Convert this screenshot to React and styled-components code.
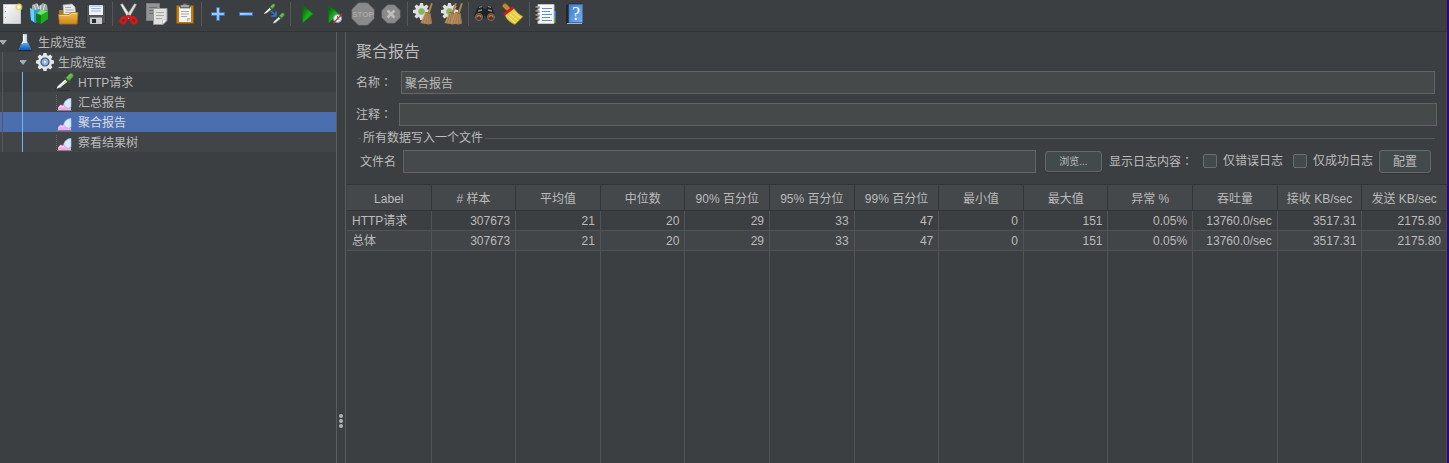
import React from "react";
import styled, { createGlobalStyle } from "styled-components";

const color = {
  bg: "#3c3f41",
  stripe: "#414547",
  header: "#44484a",
  field: "#45494a",
  border: "#646464",
  line: "#555555",
  grid: "#515456",
  edge: "#4a4d4f",
  dark: "#323537",
  text: "#bbbbbb",
  selected: "#4b6eaf",
};

const GlobalStyle = createGlobalStyle`
  * { box-sizing: border-box; }
  body {
    margin: 0;
    background: ${color.bg};
    color: ${color.text};
    font: 12px/20px "Liberation Sans", "Noto Sans CJK SC", sans-serif;
  }
  button, input { font: inherit; color: inherit; }
`;

const Window = styled.div`
  display: flex;
  flex-direction: column;
  height: 100vh;
  min-height: 300px;
  border-right: 2px solid #2a0a7a;
  overflow: hidden;
`;

const Toolbar = styled.header`
  display: flex;
  flex: none;
  height: 32px;
  margin-left: -2px;
  border-bottom: 1px solid ${color.dark};
`;

const ToolButton = styled.button`
  display: grid;
  place-items: center;
  flex: none;
  width: 28px;
  height: 28px;
  padding: 0;
  border: 0;
  background: none;
`;

const Separator = styled.span`
  flex: none;
  width: 5px;
  height: 24px;
  margin-top: 2px;
  background: linear-gradient(#555859, #555859) center / 1px 100% no-repeat;
`;

const Svg = styled.svg`
  display: block;
  flex: none;
  width: ${(p) => p.$size || 24}px;
  height: ${(p) => p.$size || 24}px;
`;

const Body = styled.div`
  display: flex;
  flex: 1;
  min-height: 0;
`;

const Sidebar = styled.nav`
  flex: none;
  width: 336px;
`;

const Tree = styled.ul`
  margin: 0;
  padding: 0;
  list-style: none;
`;

const guide = (c) => `linear-gradient(${c}, ${c})`;

const TreeRow = styled.li`
  display: flex;
  align-items: center;
  height: 20px;
  padding-left: ${(p) => p.$level * 20}px;
  color: ${(p) => (p.$selected ? "#d6dbe4" : color.text)};
  background-color: ${(p) => (p.$selected ? color.selected : p.$striped ? color.stripe : "transparent")};
  background-image: ${(p) =>
    [p.$level > 0 && guide("#55585a"), p.$level > 1 && guide("#6cb8f5")].filter(Boolean).join(",") || "none"};
  background-repeat: no-repeat;
  background-size: 1px 100%;
  background-position: 2px 0, 22px 0;
`;

const Toggle = styled.button`
  flex: none;
  width: 8px;
  height: 8px;
  margin-right: 7px;
  padding: 0;
  border: 0;
  background: none;
`;

const ToggleSpace = styled.span`
  flex: none;
  width: 15px;
`;

const TreeLabel = styled.span`
  margin-left: 3px;
  padding-top: 2px;
`;

const Divider = styled.div`
  display: flex;
  flex: none;
  flex-direction: column;
  align-items: center;
  justify-content: flex-end;
  gap: 1px;
  width: 10px;
  padding-bottom: 35px;
  border-left: 1px solid #5a5d5e;
  border-right: 1px solid #5a5d5e;
`;

const Grip = styled.span`
  width: 4px;
  height: 4px;
  border-radius: 2px;
  background: #b0b2b3;
`;

const Main = styled.main`
  display: flex;
  flex: 1;
  flex-direction: column;
  min-width: 0;
  box-shadow: inset -1px 0 ${color.edge};
`;

const Title = styled.h1`
  margin: 8px 10px 7px;
  font-size: 16px;
  line-height: 24px;
  font-weight: 400;
`;

const Field = styled.div`
  display: flex;
  align-items: center;
  margin: 0 ${(p) => p.$right}px 9px 10px;
  gap: ${(p) => p.$gap}px;
`;

const Colon = styled.span`
  font-family: "Noto Sans CJK TC", sans-serif;
`;

const TextInput = styled.input`
  flex: 1;
  min-width: 0;
  height: 23px;
  padding: 0 3px;
  border: 1px solid ${color.border};
  border-radius: 0;
  background: ${color.field};
  outline: none;
`;

const Group = styled.section`
  margin: -7px 12px 0 12px;
`;

const GroupTitle = styled.h2`
  display: flex;
  align-items: center;
  gap: 2px;
  height: 20px;
  margin: 0;
  font-size: 12px;
  line-height: 22px;
  font-weight: 400;
  &::before, &::after {
    content: "";
    height: 1px;
    background: ${color.line};
  }
  &::before { width: 3px; }
  &::after { flex: 1; }
`;

const FileRow = styled.div`
  display: flex;
  align-items: center;
  height: 23px;
  margin: 2px 4px 11px 2px;
`;

const FileField = styled.div`
  display: flex;
  flex: 1;
  align-items: center;
  gap: 7px;
  min-width: 0;
  margin-right: 9px;
`;

const Button = styled.button`
  flex: none;
  width: ${(p) => (p.$small ? 57 : 52)}px;
  height: ${(p) => (p.$small ? 21 : 23)}px;
  padding: 0;
  border: 1px solid #66696a;
  border-radius: 3px;
  background: #434a4b;
  box-shadow: 0 1px 1px #333638;
  font-size: ${(p) => (p.$small ? 10 : 12)}px;
  line-height: 16px;
`;

const LogLabel = styled.span`
  flex: none;
  margin: 0 10px 0 7px;
`;

const CheckLabel = styled.label`
  display: flex;
  flex: none;
  align-items: center;
  gap: 6px;
  height: 20px;
  margin: 0 ${(p) => (p.$last ? 6 : 10)}px 2px 0;
`;

const Checkbox = styled.input`
  appearance: none;
  width: 14px;
  height: 14px;
  margin: 0;
  border: 1px solid #6b6e6f;
  border-radius: 2px;
  background: #434a4b;
  &:checked { background: ${color.selected}; }
`;

const TableArea = styled.div`
  flex: 1;
  min-height: 0;
  border-top: 1px solid ${color.dark};
  border-left: 1px solid transparent;
`;

const Table = styled.table`
  width: 100%;
  height: 100%;
  table-layout: fixed;
  border-collapse: separate;
  border-spacing: 0;
`;

const HeadCell = styled.th`
  height: 26px;
  padding: 2px 0 0;
  border-right: 1px solid ${color.dark};
  border-bottom: 1px solid ${color.dark};
  background: ${color.header};
  font-weight: 400;
  line-height: 20px;
  white-space: nowrap;
  &:last-child { border-right-color: ${color.edge}; }
`;

const DataRow = styled.tr`
  height: 20px;
  background: ${(p) => (p.$striped ? color.stripe : "transparent")};
`;

const Cell = styled.td`
  padding: ${(p) => (p.$empty ? 0 : 2)}px 5px 0;
  border-right: 1px solid ${color.grid};
  border-bottom: ${(p) => (p.$empty ? 0 : 1)}px solid ${color.grid};
  line-height: 17px;
  text-align: right;
  white-space: nowrap;
  &:first-child { text-align: left; }
  &:last-child { border-right-color: ${color.edge}; }
`;

const Gradients = () => (
  <svg width="0" height="0" style={{ display: "block" }} aria-hidden="true">
    <defs>
      <linearGradient id="paper" x2="1" y2="1"><stop stopColor="#ffffff" /><stop offset="1" stopColor="#d4d4d4" /></linearGradient>
      <linearGradient id="play" x2="1" y2="1"><stop stopColor="#064d06" /><stop offset=".55" stopColor="#1cb41c" /><stop offset="1" stopColor="#096809" /></linearGradient>
      <linearGradient id="folder" x2="0" y2="1"><stop stopColor="#f0bd55" /><stop offset="1" stopColor="#c8871c" /></linearGradient>
      <linearGradient id="blue" x2="1" y2="1"><stop stopColor="#b9dbf8" /><stop offset="1" stopColor="#7db0e6" /></linearGradient>
      <linearGradient id="straw" x2="1" y2="1"><stop stopColor="#c69a68" /><stop offset="1" stopColor="#a98256" /></linearGradient>
      <linearGradient id="book" x2="1" y2="1"><stop stopColor="#3f7fd0" /><stop offset="1" stopColor="#75adf0" /></linearGradient>
      <linearGradient id="flask" x2="0" y2="1"><stop stopColor="#59a7f4" /><stop offset="1" stopColor="#0757b8" /></linearGradient>
      <linearGradient id="bulb" x2="1" y2="1"><stop stopColor="#9ddb78" /><stop offset="1" stopColor="#3f8a2b" /></linearGradient>
    </defs>
  </svg>
);

const NewIcon = () => (
  <Svg viewBox="0 0 24 24">
    <path d="M3.5 2.5h17v19h-17z" fill="url(#paper)" stroke="#c8c8c8" />
    <path d="M5.5 5v1M5.5 9v1M5.5 15v1" stroke="#aaa" />
    <circle cx="19" cy="5" r="3.5" fill="#e6d452" opacity=".75" />
    <circle cx="19" cy="5" r="1.8" fill="#fffbd0" />
  </Svg>
);

const TemplatesIcon = () => (
  <Svg viewBox="0 0 24 24">
    <path d="M4 3l5-2 2 3 4-3 4 2 1 6-7 5-9-4z" fill="#9ca8a8" />
    <path d="M6 3l2 5M9 2l2 6M13 3l-1 5M17 2l-2 7" stroke="#d6dfdf" />
    <path d="M2 6l4 2 6-1v12l-5 2-4-3z" fill="#2d9bd6" />
    <path d="M2 6l4 2v12l-3-2z" fill="#72cdf2" />
    <path d="M8 12l5-3 7-1v9l-7 5-5-3z" fill="#1faa25" />
    <path d="M8 12l5 1v9l-5-3z" fill="#087b16" />
    <path d="M9 11l4-3 7 1-7 4z" fill="#77e357" />
  </Svg>
);

const OpenIcon = () => (
  <Svg viewBox="0 0 24 24">
    <path d="M3 8h5l1 2h12v6H3z" fill="#a87823" />
    <path d="M7 3l9-1 3 3 1 11H8z" fill="#e9e9e9" stroke="#aaa" strokeWidth=".7" />
    <path d="M9 5.5h6M9.5 8h8M9.5 10.500h8" stroke="#aaa" />
    <path d="M2.500 12.500H13l2-2h7l-1 11.500H3.500z" fill="url(#folder)" stroke="#b77812" strokeWidth=".8" />
    <path d="M3.500 13.500h10l2-2h5" stroke="#ffe094" fill="none" strokeWidth=".7" />
  </Svg>
);

const SaveIcon = () => (
  <Svg viewBox="0 0 24 24">
    <path d="M2.500 2.500h19v19H4l-1.500-1.500z" fill="#505356" stroke="#333637" />
    <path d="M5 3h14v10H5z" fill="#edf4fb" />
    <path d="M5 3h14v2H5z" fill="#bed6ef" />
    <path d="M7 6.500h10M7 9h10" stroke="#a8b4c0" />
    <path d="M6 15.500h12V22H6z" fill="#c9cbcc" />
    <path d="M8 17h4v4H8z" fill="#292c2e" />
  </Svg>
);

const CutIcon = () => (
  <Svg viewBox="0 0 24 24">
    <path d="M3.500 2.500l2-.8 8.500 13-2.500 2z" fill="#f0f0f0" stroke="#9b9b9b" strokeWidth=".5" />
    <path d="M19.500 2.500l-2-.8-8.500 13 2.500 2z" fill="#dcdcdc" stroke="#999" strokeWidth=".5" />
    <g fill="none" stroke="#d8161c" strokeWidth="2.600">
      <ellipse cx="6.300" cy="18.300" rx="2.400" ry="3" transform="rotate(35 6.300 18.300)" />
      <ellipse cx="16.700" cy="18.300" rx="2.400" ry="3" transform="rotate(-35 16.700 18.300)" />
      <path d="M8 16l3.500-2 3.500 2" />
    </g>
  </Svg>
);

const CopyIcon = () => (
  <Svg viewBox="0 0 24 24">
    <path d="M1.500 1.500h13v17h-13z" fill="#929596" stroke="#7c7f80" />
    <path d="M4 5.500h8M4 8.500h4M4 11.500h4" stroke="#6c6f70" />
    <path d="M8.500 6.500h13.500v12l-4 4H8.500z" fill="#dfe0de" stroke="#96999a" />
    <path d="M11 10.500h8M11 13.500h8M11 16.500h6" stroke="#a5a7a7" />
    <path d="M17.500 22v-4H22z" fill="#fff" stroke="#aaa" strokeWidth=".6" />
  </Svg>
);

const PasteIcon = () => (
  <Svg viewBox="0 0 24 24">
    <path d="M3.500 3.500h17v18h-17z" fill="#c17d18" stroke="#865510" />
    <path d="M6 5h12v15H6z" fill="#f3f3f1" />
    <path d="M8 9.500h8M8 12h8M8 14.500h6" stroke="#aaa" />
    <path d="M14 20v-4h4z" fill="#bdbdbd" />
    <path d="M7 6V3h3V1.500h4V3h3v3z" fill="#777a78" stroke="#4a4c4b" strokeWidth=".6" />
    <path d="M8 4h8" stroke="#d2d2d2" />
  </Svg>
);

const PlusIcon = () => (
  <Svg viewBox="0 0 24 24">
    <path d="M10.500 5.500h3v5h5v3h-5v5h-3v-5h-5v-3h5z" fill="url(#blue)" stroke="#3774bd" />
  </Svg>
);

const MinusIcon = () => (
  <Svg viewBox="0 0 24 24">
    <path d="M5.500 10.500h13v3h-13z" fill="url(#blue)" stroke="#3774bd" />
  </Svg>
);

const Dropper = () => (
  <g>
    <path d="M.5 17.500l2-3.500 8-7.500 3 3L5.500 16z" fill="#cfd8d5" stroke="#252829" strokeWidth=".8" />
    <path d="M2.500 15.500l9-8" stroke="#fff" strokeWidth="1.300" />
    <path d="M9.500 5.500l5.500 5.500" stroke="#335a2b" strokeWidth="2" />
    <path d="M11 5.800L14.500 2c2-1.800 4.800.6 3.300 3L14.300 9z" fill="url(#bulb)" stroke="#3f7d2c" strokeWidth=".7" />
  </g>
);

const ToggleIcon = () => (
  <Svg viewBox="0 0 24 24">
    <g transform="translate(1 1) scale(.66)"><Dropper /></g>
    <g transform="translate(10 10) scale(.68)"><Dropper /></g>
    <path d="M9 9l4.500 4M14 9.500v4.500h-4.500" stroke="#287bdd" strokeWidth="1.500" fill="none" />
  </Svg>
);

const StartIcon = () => (
  <Svg viewBox="0 0 24 24">
    <path d="M7.500 3.500l11 8.500-11 9z" fill="url(#play)" stroke="#0a720a" strokeWidth=".7" />
  </Svg>
);

const StartNoPauseIcon = () => (
  <Svg viewBox="0 0 24 24">
    <path d="M5.500 3.500l11 8.500-11 9z" fill="url(#play)" stroke="#0a720a" strokeWidth=".7" />
    <circle cx="14.500" cy="16.500" r="4" fill="#e9f3fa" stroke="#72a4cc" />
    <path d="M14.500 14v3h2" stroke="#345" fill="none" strokeWidth=".7" />
    <path d="M10.500 21l8.500-9" stroke="#e32b2b" strokeWidth="1.300" />
  </Svg>
);

const StopText = styled.text`
  font: 700 8px "Liberation Sans", sans-serif;
  fill: #a8a8a8;
  text-anchor: middle;
`;

const StopIcon = () => (
  <Svg viewBox="0 0 24 24">
    <path d="M7.500 1h9l6.500 6.500v9L16.500 23h-9L1 16.500v-9z" fill="#8a8a8a" stroke="#7c7c7c" strokeWidth=".7" />
    <StopText x="12" y="15">STOP</StopText>
  </Svg>
);

const ShutdownIcon = () => (
  <Svg viewBox="0 0 24 24">
    <path d="M8.500 3h7l5.500 5.500v7L15.500 21h-7L3 15.500v-7z" fill="#8a8a8a" stroke="#7c7c7c" strokeWidth=".7" />
    <path d="M8.500 8.500l7 7M15.500 8.500l-7 7" stroke="#bebebe" strokeWidth="2.500" />
  </Svg>
);

const TEETH = [0, 45, 90, 135, 180, 225, 270, 315];

const Cog = () => (
  <g transform="translate(9.500 9.500)">
    {TEETH.map((a) => (
      <path key={a} d="M-2-5.500l.6-3h2.800l.6 3z" fill="#dedfde" transform={`rotate(${a})`} />
    ))}
    <circle r="6.300" fill="#dedfde" />
    <circle r="3" fill="#79c23e" stroke="#a3aca0" />
  </g>
);

const Whisk = () => (
  <g>
    <path d="M19 1l1.800.5-3 9.500h-2.300z" fill="#b1824f" />
    <path d="M13.500 10l5 1 1.500 10.500-3.500 1-8-1.500z" fill="url(#straw)" />
    <path d="M14 12l-3 9M15.500 12l-2 10M17 12l-.5 10M18 12l1 9" stroke="#8d6b45" strokeWidth=".6" />
    <path d="M13.500 10.500l5 1" stroke="#7c5833" />
  </g>
);

const ClearIcon = () => (
  <Svg viewBox="0 0 24 24">
    <Cog />
    <Whisk />
  </Svg>
);

const ClearAllIcon = () => (
  <Svg viewBox="0 0 24 24">
    <Cog />
    <g transform="translate(-4 0)"><Whisk /></g>
    <g transform="translate(2 0)"><Whisk /></g>
  </Svg>
);

const SearchIcon = () => (
  <Svg viewBox="0 0 24 24">
    <path d="M5 5l4-1 2 3h2l2-3 4 1 3 9-4 5-5-3-1-3-1 3-5 3-5-5z" fill="#202222" />
    <path d="M6 5.500l3-1M15 4.500l3 1M5 9l4-1M15 8l4 1" stroke="#8b8d8e" strokeWidth="1.300" />
    <circle cx="6" cy="15" r="3.500" fill="#54301d" stroke="#777" />
    <circle cx="18" cy="15" r="3.500" fill="#54301d" stroke="#777" />
    <path d="M4 15.500a2 2 0 0 1 4 0M16 15.500a2 2 0 0 1 4 0" fill="none" stroke="#d2743b" strokeWidth="1.300" />
  </Svg>
);

const ResetIcon = () => (
  <Svg viewBox="0 0 24 24">
    <path d="M1.500 4.500c0-2.500 2-3.500 4-2.500l5.500 6-3 3z" fill="#cc862f" stroke="#8c5620" strokeWidth=".6" />
    <path d="M4 13l9-6.500c3 4 5 6 9 8L14 22.500C10 21 5.500 18 4 13z" fill="#e5cd48" stroke="#a9851b" strokeWidth=".6" />
    <path d="M7 14l7 7M9 12.500l8 6.500M12 10.500l8 6" stroke="#fff08b" strokeWidth=".8" />
    <path d="M3 12.500l9-7" stroke="#c51d1d" strokeWidth="2.800" />
  </Svg>
);

const FunctionIcon = () => (
  <Svg viewBox="0 0 24 24">
    <path d="M18 9h4v7h-4z" fill="#2c74d3" />
    <path d="M18 16h4v5h-4z" fill="#25912d" />
    <path d="M4 2.500h16v19H4z" fill="#f8f8f8" stroke="#c4c4c4" />
    <path d="M8 6.500h10M8 9.500h8M8 12.500h10M8 15.500h8M8 18.500h10" stroke="#5c92cc" />
    <path d="M1.500 5.500h4M1.500 9.500h4M1.500 13.500h4M1.500 17.500h4" stroke="#272727" strokeWidth="2.200" />
    <path d="M1.500 5h4M1.500 9h4M1.500 13h4M1.500 17h4" stroke="#e6e6e6" />
  </Svg>
);

const HelpText = styled.text`
  font: 18px "Liberation Serif", serif;
  fill: #ffffff;
  text-anchor: middle;
`;

const HelpIcon = () => (
  <Svg viewBox="0 0 24 24">
    <path d="M4 3l3-1.500h13v20H4z" fill="#20262d" />
    <path d="M7 2.500h13.500v18H7z" fill="url(#book)" stroke="#3f74b8" strokeWidth=".7" />
    <path d="M5 21.500h15" stroke="#aab3bd" />
    <HelpText x="14" y="18">?</HelpText>
  </Svg>
);

const FlaskIcon = () => (
  <Svg $size={20} viewBox="0 0 20 20">
    <path d="M8 2h4v7l4 9H4l4-9z" fill="#dce8f2" stroke="#777f86" strokeWidth=".6" />
    <path d="M6.700 11h6.600l2.700 7H4z" fill="url(#flask)" />
    <path d="M8.500 2v7L7 12" stroke="#fff" fill="none" />
    <path d="M3 18.500h14" stroke="#25292b" />
  </Svg>
);

const ThreadGroupIcon = () => (
  <Svg $size={20} viewBox="0 0 20 20">
    <g transform="translate(10 10)">
      {TEETH.map((a) => (
        <path key={a} d="M-2.200-6l.7-3h3l.7 3z" fill="#e6e7e7" transform={`rotate(${a})`} />
      ))}
      <circle r="7" fill="#e6e7e7" />
      <circle r="4" fill="#9eb8dd" stroke="#2d5690" strokeWidth="1.200" />
      <path d="M-1.500-2.500l4 2.500-4 2.500z" fill="#f2f7fc" stroke="#335b91" strokeWidth=".4" />
    </g>
  </Svg>
);

const SamplerIcon = () => (
  <Svg $size={20} viewBox="0 0 20 20">
    <path d="M2 18.500h13" stroke="#2e3133" />
    <Dropper />
  </Svg>
);

const ChartIcon = () => (
  <Svg $size={20} viewBox="0 0 20 20">
    <path d="M1.500 3v15.500" stroke="#666a6d" strokeDasharray="1 1" />
    <path d="M3 18v-2.500l2.500-3 2 1 2-2 3 3 3.500 1.500v2z" fill="#f3a9ea" />
    <path d="M3.500 16l2.500-2 2 1 2-2 3 3" stroke="#ffe0fb" fill="none" strokeWidth=".8" />
    <path d="M9 11.500C10 8.500 12.500 6.500 16 6.500V15c-1.500 1.500-3.500 1.500-5 0-1.200-1-2-2-2-3.500z" fill="#dcebfc" stroke="#9cc2ec" strokeWidth=".7" />
    <path d="M2 18.500h14.500" stroke="#85818a" />
  </Svg>
);

const TOOLS = [
  [["新建", NewIcon], ["模板", TemplatesIcon], ["打开", OpenIcon], ["保存", SaveIcon]],
  [["剪切", CutIcon], ["复制", CopyIcon], ["粘贴", PasteIcon]],
  [["展开", PlusIcon], ["折叠", MinusIcon], ["切换", ToggleIcon]],
  [["启动", StartIcon], ["不停顿开始", StartNoPauseIcon], ["停止", StopIcon], ["关闭", ShutdownIcon]],
  [["清除", ClearIcon], ["清除全部", ClearAllIcon]],
  [["查找", SearchIcon], ["重置搜索", ResetIcon]],
  [["函数助手", FunctionIcon], ["帮助", HelpIcon]],
];

const NODES = [
  { level: 0, label: "生成短链", Icon: FlaskIcon, open: true },
  { level: 1, label: "生成短链", Icon: ThreadGroupIcon, open: true, striped: true },
  { level: 2, label: "HTTP请求", Icon: SamplerIcon },
  { level: 2, label: "汇总报告", Icon: ChartIcon, striped: true },
  { level: 2, label: "聚合报告", Icon: ChartIcon, selected: true },
  { level: 2, label: "察看结果树", Icon: ChartIcon, striped: true },
];

const COLUMNS = [
  "Label", "# 样本", "平均值", "中位数", "90% 百分位", "95% 百分位", "99% 百分位",
  "最小值", "最大值", "异常 %", "吞吐量", "接收 KB/sec", "发送 KB/sec",
];

const VALUES = ["307673", "21", "20", "29", "33", "47", "0", "151", "0.05%", "13760.0/sec", "3517.31", "2175.80"];
const ROWS = [["HTTP请求", ...VALUES], ["总体", ...VALUES]];

export default function App() {
  return (
    <Window>
      <GlobalStyle />
      <Gradients />
      <Toolbar>
        {TOOLS.map((group, i) => (
          <React.Fragment key={i}>
            {i > 0 && <Separator />}
            {group.map(([name, Icon]) => (
              <ToolButton key={name} type="button" aria-label={name}><Icon /></ToolButton>
            ))}
          </React.Fragment>
        ))}
      </Toolbar>
      <Body>
        <Sidebar>
          <Tree role="tree">
            {NODES.map(({ level, label, Icon, open, striped, selected }, i) => (
              <TreeRow key={i} role="treeitem" aria-level={level + 1} aria-selected={!!selected} $level={level} $striped={striped} $selected={selected}>
                {open ? (
                  <Toggle type="button" aria-label="折叠">
                    <Svg $size={8} viewBox="1 0 8 8"><path d="M0 2h8L4 7z" fill="#a9abac" /></Svg>
                  </Toggle>
                ) : (
                  <ToggleSpace />
                )}
                <Icon />
                <TreeLabel>{label}</TreeLabel>
              </TreeRow>
            ))}
          </Tree>
        </Sidebar>
        <Divider><Grip /><Grip /><Grip /></Divider>
        <Main>
          <Title>聚合报告</Title>
          <Field $right={12} $gap={9}>
            <label htmlFor="name">名称<Colon>：</Colon></label>
            <TextInput id="name" defaultValue="聚合报告" />
          </Field>
          <Field $right={10} $gap={7}>
            <label htmlFor="comment">注释<Colon>：</Colon></label>
            <TextInput id="comment" />
          </Field>
          <Group>
            <GroupTitle>所有数据写入一个文件</GroupTitle>
            <FileRow>
              <FileField>
                <label htmlFor="file">文件名</label>
                <TextInput id="file" />
              </FileField>
              <Button type="button" $small>浏览...</Button>
              <LogLabel>显示日志内容<Colon>：</Colon></LogLabel>
              <CheckLabel><Checkbox type="checkbox" />仅错误日志</CheckLabel>
              <CheckLabel $last><Checkbox type="checkbox" />仅成功日志</CheckLabel>
              <Button type="button">配置</Button>
            </FileRow>
          </Group>
          <TableArea>
            <Table>
              <thead>
                <tr>{COLUMNS.map((c) => <HeadCell key={c} scope="col">{c}</HeadCell>)}</tr>
              </thead>
              <tbody>
                {ROWS.map((row, i) => (
                  <DataRow key={row[0]} $striped={i % 2 === 1}>
                    {row.map((v, j) => <Cell key={j}>{v}</Cell>)}
                  </DataRow>
                ))}
                <tr aria-hidden="true">{COLUMNS.map((c) => <Cell key={c} $empty />)}</tr>
              </tbody>
            </Table>
          </TableArea>
        </Main>
      </Body>
    </Window>
  );
}
